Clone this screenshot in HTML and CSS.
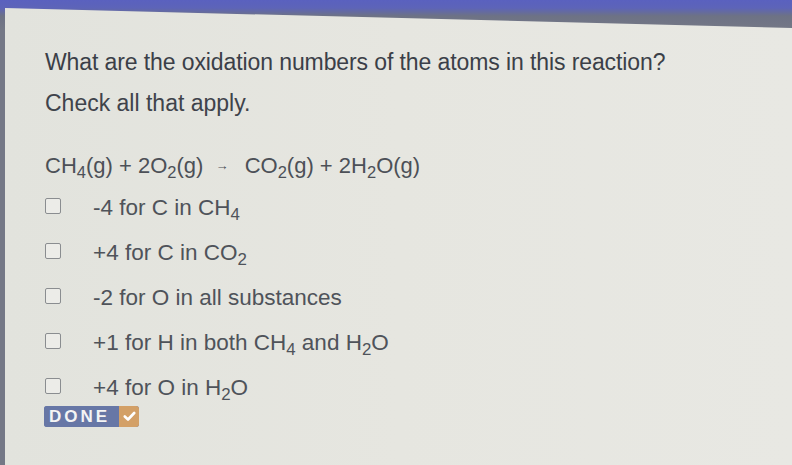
FILE: index.html
```html
<!DOCTYPE html>
<html>
<head>
<meta charset="utf-8">
<link rel="stylesheet" href="styles.css">
</head>
<body>
<div class="screen">
  <div class="panel">
    <h1 class="question">What are the oxidation numbers of the atoms in this reaction?</h1>
    <p class="instruction">Check all that apply.</p>
    <p class="equation">CH<sub>4</sub>(<i>g</i>) + 2O<sub>2</sub>(<i>g</i>) <span class="arrow">&rarr;</span> CO<sub>2</sub>(<i>g</i>) + 2H<sub>2</sub>O(<i>g</i>)</p>
    <ul class="options">
      <li class="option"><span class="box"></span><span class="label">-4 for C in CH<sub>4</sub></span></li>
      <li class="option"><span class="box"></span><span class="label">+4 for C in CO<sub>2</sub></span></li>
      <li class="option"><span class="box"></span><span class="label">-2 for O in all substances</span></li>
      <li class="option"><span class="box"></span><span class="label">+1 for H in both CH<sub>4</sub> and H<sub>2</sub>O</span></li>
      <li class="option"><span class="box"></span><span class="label">+4 for O in H<sub>2</sub>O</span></li>
    </ul>
    <button class="done"><span class="done-text">DONE</span><span class="done-check"><svg width="13" height="11" viewBox="0 0 13 11"><path d="M1.8 5.5 L5 8.5 L11.2 2" fill="none" stroke="#fff" stroke-width="2.6" stroke-linecap="round" stroke-linejoin="round"/></svg></span></button>
  </div>
</div>
</body>
</html>
```
FILE: styles.css
```css
html, body {
  margin: 0;
  padding: 0;
}
body {
  width: 792px;
  height: 465px;
  overflow: hidden;
  background: linear-gradient(180deg, #5a61bf 0px, #5d64b8 8px, #6d7285 16px, #747886 30px);
  font-family: "Liberation Sans", Arial, sans-serif;
}
.screen {
  padding: 6px 0 0 5px;
  height: 465px;
  box-sizing: border-box;
}
.panel {
  height: 100%;
  background: linear-gradient(90deg, #e2e3dd 0%, #e6e6e0 50%, #e8e8e3 100%);
  clip-path: polygon(0 2px, 100% 22px, 100% 100%, 0 100%);
  padding: 42px 0 0 40px;
  box-sizing: border-box;
  color: #40444c;
}
.question {
  margin: 0;
  font-size: 23px;
  font-weight: normal;
  color: #3b3f48;
  letter-spacing: -0.1px;
  line-height: 28px;
}
.instruction {
  margin: 13px 0 0 0;
  font-size: 23px;
  line-height: 28px;
  color: #3f434b;
}
.equation {
  margin: 36px 0 0 0;
  font-size: 22px;
  line-height: 26px;
  color: #4c5057;
}
.equation i {
  font-style: normal;
}
sub {
  font-size: 0.75em;
  line-height: 0;
  vertical-align: -0.3em;
}
.arrow {
  font-size: 13px;
  margin: 0 10px 0 6px;
  vertical-align: 3px;
}
.options {
  list-style: none;
  margin: 16px 0 0 0;
  padding: 0;
  display: flex;
  flex-direction: column;
  gap: 19px;
}
.option {
  display: flex;
  align-items: center;
  height: 26px;
}
.box {
  width: 14px;
  height: 14px;
  border: 1.5px solid #8a8d90;
  border-radius: 2px;
  background: #ecece8;
  flex: none;
  margin-top: -4px;
}
.label {
  margin-left: 32px;
  font-size: 22.5px;
  color: #4f535a;
  line-height: 26px;
}
.done {
  margin-top: 5px;
  margin-left: -1px;
  display: flex;
  align-items: stretch;
  height: 21px;
  padding: 0;
  border: none;
  border-radius: 3px;
  overflow: hidden;
  background: #6878a8;
  cursor: pointer;
}
.done-text {
  display: flex;
  align-items: center;
  padding: 0 9px 0 5px;
  font-family: "Liberation Sans", Arial, sans-serif;
  font-weight: bold;
  font-size: 17px;
  letter-spacing: 3px;
  color: #f4f4f4;
  background: #6777a6;
}
.done-check {
  display: flex;
  align-items: center;
  justify-content: center;
  width: 20px;
  background: #d3a067;
}
```
